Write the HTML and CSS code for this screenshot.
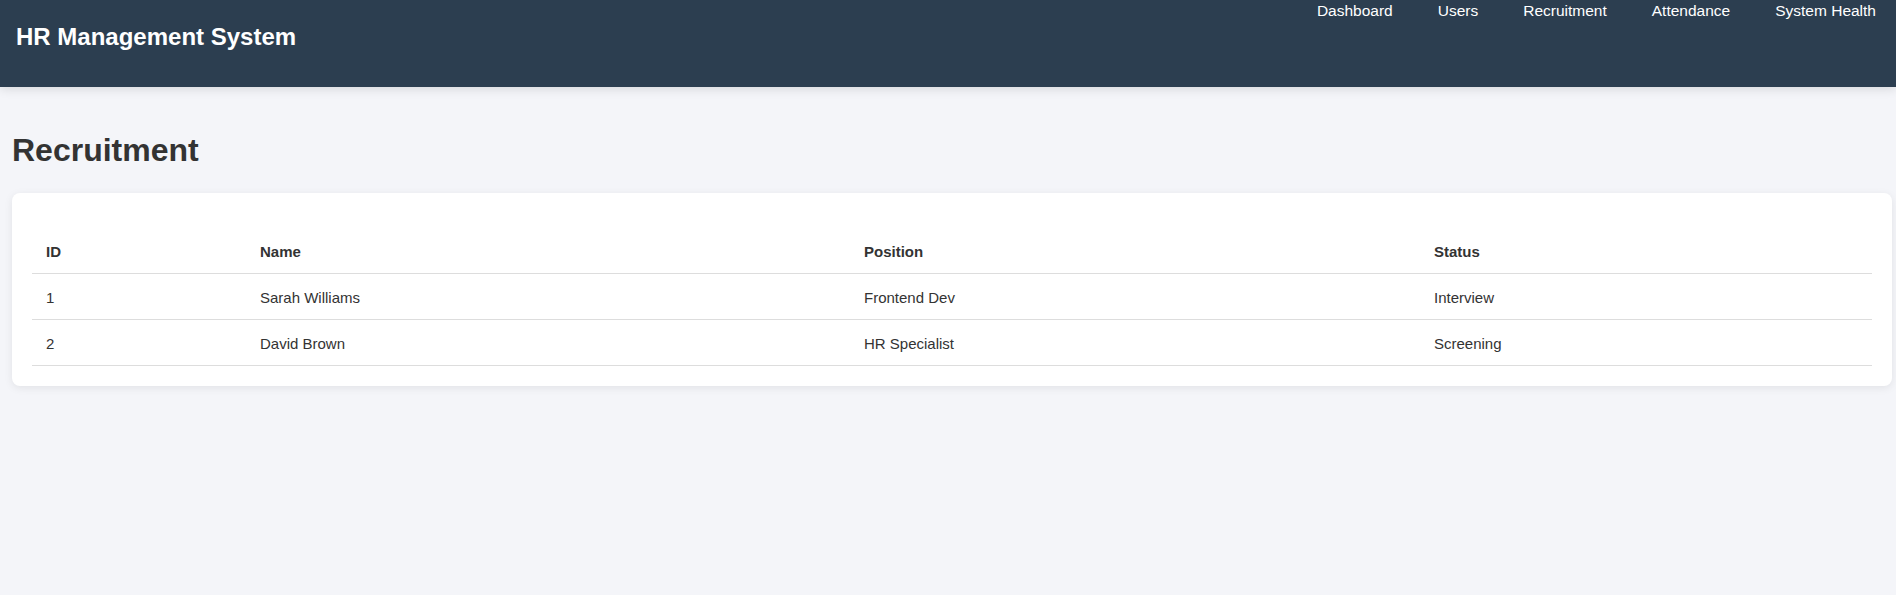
FILE: index.html
```html
<!DOCTYPE html>
<html lang="en">
<head>
<meta charset="utf-8">
<title>HR Management System</title>
<link rel="stylesheet" href="styles.css">
</head>
<body>
<header class="topbar">
  <h1 class="brand">HR Management System</h1>
  <nav class="nav">
    <a href="#" class="nav-link">Dashboard</a>
    <a href="#" class="nav-link">Users</a>
    <a href="#" class="nav-link">Recruitment</a>
    <a href="#" class="nav-link">Attendance</a>
    <a href="#" class="nav-link">System Health</a>
  </nav>
</header>
<main class="content">
  <h2 class="page-title">Recruitment</h2>
  <section class="card">
    <table class="data-table">
      <colgroup>
        <col class="col-id">
        <col class="col-name">
        <col class="col-position">
        <col class="col-status">
      </colgroup>
      <thead>
        <tr><th>ID</th><th>Name</th><th>Position</th><th>Status</th></tr>
      </thead>
      <tbody>
        <tr><td>1</td><td>Sarah Williams</td><td>Frontend Dev</td><td>Interview</td></tr>
        <tr><td>2</td><td>David Brown</td><td>HR Specialist</td><td>Screening</td></tr>
      </tbody>
    </table>
  </section>
</main>
</body>
</html>
```

FILE: styles.css
```css
* { box-sizing: border-box; }

html, body {
  margin: 0;
  padding: 0;
}

body {
  background: #f4f5f9;
  color: #333333;
  font-family: "Liberation Sans", Arial, sans-serif;
  min-height: 595px;
}

.topbar {
  height: 87px;
  background: #2c3e50;
  color: #ffffff;
  display: flex;
  justify-content: space-between;
  align-items: flex-start;
  padding: 0 20px 0 16px;
  box-shadow: 0 2px 10px rgba(0, 0, 0, 0.12);
  position: relative;
}

.brand {
  margin: 23px 0 0;
  font-size: 24px;
  line-height: 28px;
  font-weight: 700;
  color: #ffffff;
}

.nav {
  display: flex;
  gap: 45px;
  margin-top: 2px;
}

.nav-link {
  color: #ffffff;
  text-decoration: none;
  font-size: 15.5px;
  line-height: 17px;
}

.content {
  padding: 20px 4px 0 12px;
}

.page-title {
  margin: 25px 0 24px;
  font-size: 32px;
  line-height: 37px;
  font-weight: 700;
  color: #333333;
}

.card {
  background: #ffffff;
  border-radius: 8px;
  box-shadow: 0 2px 8px rgba(0, 0, 0, 0.08);
  padding: 35px 20px 20px;
}

.data-table {
  width: 100%;
  border-collapse: collapse;
  table-layout: fixed;
  font-size: 15px;
}

.col-id { width: 214px; }
.col-name { width: 604px; }
.col-position { width: 570px; }
.col-status { width: auto; }

.data-table th,
.data-table td {
  text-align: left;
  padding: 13px 14px 11px;
  line-height: 21px;
  border-bottom: 1px solid #dddddd;
  color: #333333;
}

.data-table th {
  font-weight: 700;
}
```
